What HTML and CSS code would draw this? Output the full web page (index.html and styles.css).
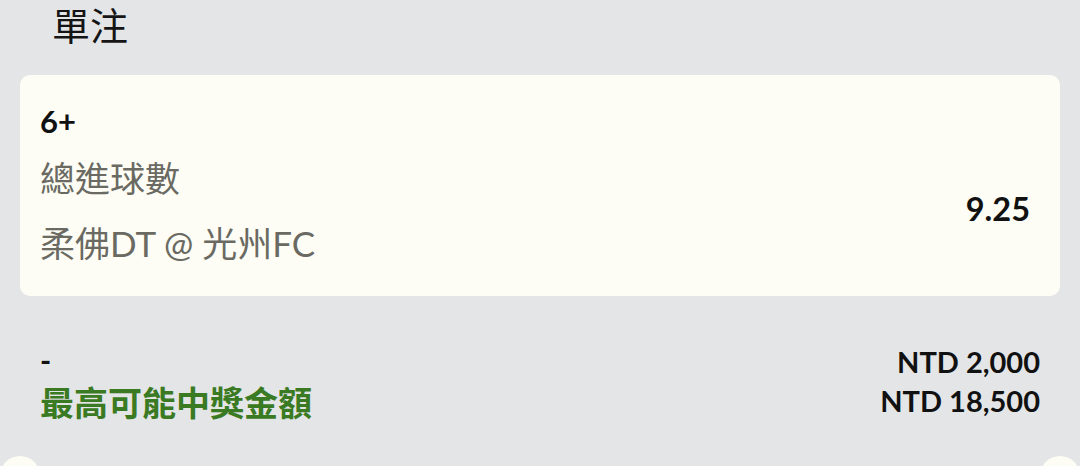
FILE: index.html
```html
<!DOCTYPE html>
<html lang="zh-Hant">

<head>
    <meta charset="UTF-8">
    <meta name="viewport" content="width=device-width, initial-scale=1.0">
    <title>單注</title>
    <link rel="stylesheet" href="styles.css">
</head>

<body>
    <div class="page">
        <h1 class="title">單注</h1>
        <div class="card">
            <div class="pick">
                <span class="selection">6+</span>
                <span class="market">總進球數</span>
                <span class="match">柔佛DT @ 光州FC</span>
            </div>
            <span class="odds">9.25</span>
        </div>
        <div class="totals">
            <div class="labels">
                <span class="stake-label">-</span>
                <span class="win-label">最高可能中獎金額</span>
            </div>
            <div class="amounts">
                <span>NTD 2,000</span>
                <span>NTD 18,500</span>
            </div>
        </div>
        <div class="notches">
            <span class="notch"></span>
            <span class="notch"></span>
        </div>
    </div>
</body>

</html>
```

FILE: styles.css
```css
* {
    margin: 0;
    padding: 0;
    box-sizing: border-box;
}

html,
body {
    height: 100%;
    overflow: hidden;
}

body {
    background-color: #e4e5e7;
    font-family: Lato, "Noto Sans CJK TC", sans-serif;
    color: #111111;
}

.page {
    display: flex;
    flex-direction: column;
    height: 466px;
    overflow: hidden;
}

.title {
    font-weight: 400;
    font-size: 38px;
    line-height: 46px;
    height: 75px;
    padding: 2px 0 0 52px;
    color: #151515;
}

.card {
    display: flex;
    justify-content: space-between;
    align-items: flex-start;
    margin: 0 20px;
    padding: 24px 30px 0 20px;
    height: 221px;
    background-color: #fdfdf5;
    border-radius: 10px;
}

.pick {
    display: flex;
    flex-direction: column;
}

.selection {
    font-size: 31px;
    font-weight: 700;
    line-height: 44px;
}

.market,
.match {
    font-family: "Noto Sans CJK TC", sans-serif;
    font-size: 35px;
    line-height: 67px;
    color: #6a6a63;
}

.match {
    font-family: Lato, "Noto Sans CJK TC", sans-serif;
}

.odds {
    margin-top: 90px;
    font-size: 32.5px;
    font-weight: 700;
}

.totals {
    display: flex;
    justify-content: space-between;
    align-items: flex-start;
    padding: 0 40px;
    height: 160px;
}

.labels,
.amounts {
    display: flex;
    flex-direction: column;
}

.labels {
    padding-top: 49px;
}

.amounts {
    padding-top: 46px;
    align-items: flex-end;
    font-size: 29px;
    font-weight: 700;
    line-height: 39px;
}

.stake-label {
    font-size: 30px;
    font-weight: 700;
    line-height: 30px;
}

.win-label {
    margin-top: 6px;
    font-size: 34px;
    font-weight: 700;
    line-height: 44px;
    color: #3a7a22;
}

.notches {
    display: flex;
    justify-content: space-between;
    height: 10px;
    overflow: hidden;
}

.notch {
    flex: none;
    width: 40px;
    height: 40px;
    border-radius: 50%;
    background-color: #fdfdf5;
}
```
